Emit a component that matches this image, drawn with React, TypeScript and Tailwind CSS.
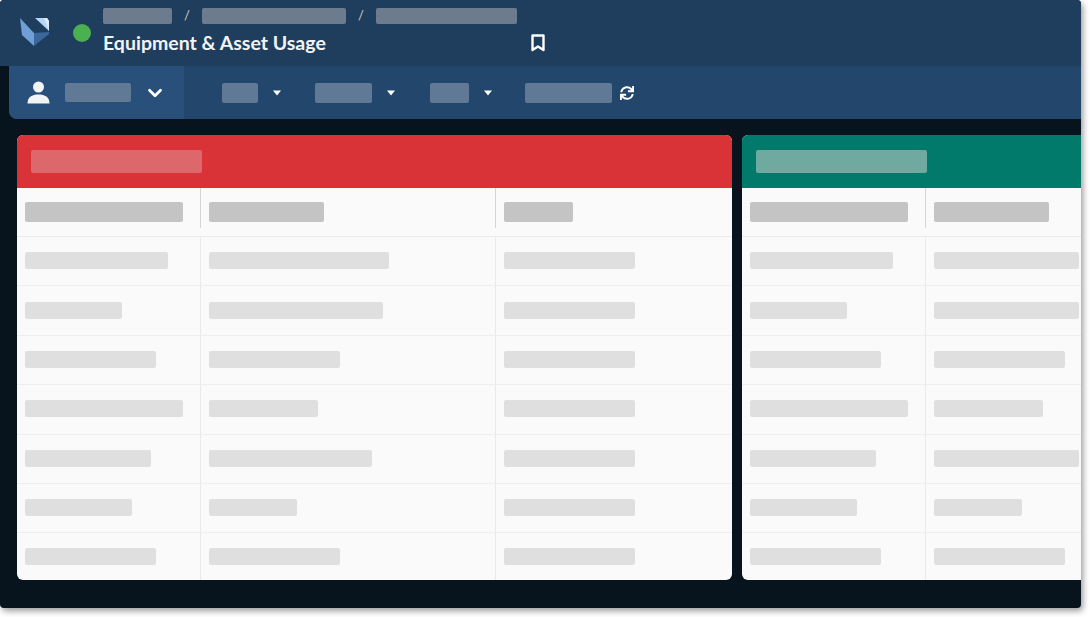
import { ChevronDown } from 'lucide-react'
import { FaSync } from 'react-icons/fa'

// Skeleton widths per table, taken row by row from the screenshot
const RED_ROWS = [
  [143, 180, 131],
  [97, 174, 131],
  [131, 131, 131],
  [158, 109, 131],
  [126, 163, 131],
  [107, 88, 131],
  [131, 131, 131],
]

const GREEN_ROWS = [
  [143, 145],
  [97, 145],
  [131, 131],
  [158, 109],
  [126, 145],
  [107, 88],
  [131, 131],
]

function Logo() {
  return (
    <svg width="30" height="30" viewBox="0 0 30 30" className="shrink-0">
      <path d="M0 1 L14 16 L14 29 L2 18 Z" fill="#6f9fd4" />
      <path d="M14 16 L29 15 L29 17 L14 29 Z" fill="#3a689c" />
      <path d="M15 1 L27 1 L29 4 L29 14 Z" fill="#b5d5f5" />
      <path d="M24 1 L27 1 L29 4 L29 14 Z" fill="#dcebfa" />
    </svg>
  )
}

function Caret() {
  return (
    <svg width="8" height="6" viewBox="0 0 8 6" className="shrink-0">
      <path d="M0 0.5 H8 L4 5.5 Z" fill="#ffffff" />
    </svg>
  )
}

function Bookmark() {
  return (
    <svg width="16" height="18" viewBox="0 0 16 18" fill="none" stroke="#ffffff" strokeWidth="2.4">
      <path d="M2.5 1.5 H13.5 V16 L8 12.5 L2.5 16 Z" strokeLinejoin="round" />
    </svg>
  )
}

function PersonIcon() {
  return (
    <svg width="23" height="23" viewBox="0 0 23 23" fill="#f1f3f5" className="shrink-0">
      <circle cx="11.5" cy="6" r="5.5" />
      <path d="M0.5 22.5 C0.5 16 5 13.5 11.5 13.5 C18 13.5 22.5 16 22.5 22.5 Z" />
    </svg>
  )
}

function Bar({ className }: { className: string }) {
  return <div className={`rounded-[2px] ${className}`} />
}

function Table({
  title,
  headerClass,
  titleClass,
  widthClass,
  columnsClass,
  headers,
  rows,
}: {
  title: number
  headerClass: string
  titleClass: string
  widthClass: string
  columnsClass: string
  headers: number[]
  rows: number[][]
}) {
  return (
    <div className={`flex flex-col shrink-0 rounded-l-md overflow-hidden bg-[#fafafa] ${widthClass}`}>
      <div className={`h-[53px] shrink-0 flex items-center pl-[14px] ${headerClass}`}>
        <div className={`h-[23px] rounded-[2px] ${titleClass}`} style={{ width: title }} />
      </div>
      <div className={`grid h-[49px] shrink-0 border-b border-[#ececec] ${columnsClass}`}>
        {headers.map((w, i) => (
          <div key={i} className={`relative flex items-center ${i > 0 ? 'pl-[9px]' : 'pl-2'}`}>
            {i > 0 && <div className="absolute left-0 top-0 bottom-2 w-px bg-[#d6d6d6]" />}
            <div className="h-5 rounded-[2px] bg-[#c4c4c4]" style={{ width: w }} />
          </div>
        ))}
      </div>
      {rows.map((row, r) => (
        <div key={r} className={`grid h-[49.4px] border-b border-[#eeeeee] last:h-auto last:flex-1 last:border-b-0 ${columnsClass}`}>
          {row.map((w, i) => (
            <div key={i} className={`flex items-center pl-2 pb-px ${i > 0 ? 'border-l border-[#eaeaea]' : ''}`}>
              <div className="h-[17px] rounded-[2px] bg-[#dfdfdf]" style={{ width: w }} />
            </div>
          ))}
        </div>
      ))}
    </div>
  )
}

export default function App() {
  return (
    <div className="w-[1090px] h-[617px] bg-white overflow-hidden font-['Lato','Open_Sans',sans-serif]">
      <div className="w-[1081px] h-[608px] flex flex-col bg-[#07131d] overflow-hidden rounded-sm shadow-[2px_3px_6px_rgba(0,0,0,0.4)]">
        {/* Title bar */}
        <header className="h-[66px] shrink-0 flex bg-[#1f3d5c]">
          <div className="w-[73px] shrink-0 flex items-center pl-5 pb-[2px]">
            <Logo />
          </div>
          <div className="w-[30px] shrink-0 flex items-center">
            <div className="w-[18px] h-[18px] rounded-full bg-[#4caf50]" />
          </div>
          <div className="flex flex-col pt-2">
            <div className="flex items-center h-4 text-[13px] text-[#c5d0db]">
              <Bar className="h-4 w-[69px] bg-[#6c7c8e]" />
              <span className="w-[30px] text-center">/</span>
              <Bar className="h-4 w-[144px] bg-[#6c7c8e]" />
              <span className="w-[30px] text-center">/</span>
              <Bar className="h-4 w-[141px] bg-[#6c7c8e]" />
            </div>
            <div className="flex items-center mt-[7px]">
              <h1 className="w-[427px] text-[19.5px] leading-[24px] font-bold text-[#f1f4f7]">Equipment &amp; Asset Usage</h1>
              <Bookmark />
            </div>
          </div>
        </header>

        {/* Filter bar */}
        <div className="h-[53px] shrink-0 ml-[9px] flex items-center rounded-bl-lg bg-[#23466c] overflow-hidden">
          <div className="w-[175px] h-full shrink-0 flex items-center pl-[18px] bg-[#28507a]">
            <PersonIcon />
            <Bar className="h-[19px] w-[66px] ml-[15px] bg-[#607a96]" />
            <ChevronDown size={22} strokeWidth={3} className="ml-[13px] text-white" />
          </div>
          <div className="flex items-center pl-[38px]">
            <Bar className="h-[20px] w-9 bg-[#607a96]" />
            <div className="ml-[15px]"><Caret /></div>
            <Bar className="h-[20px] w-[57px] ml-[34px] bg-[#607a96]" />
            <div className="ml-[15px]"><Caret /></div>
            <Bar className="h-[20px] w-[39px] ml-[35px] bg-[#607a96]" />
            <div className="ml-[15px]"><Caret /></div>
            <Bar className="h-[20px] w-[87px] ml-[33px] bg-[#607a96]" />
            <FaSync size={14} className="ml-2 text-white" />
          </div>
        </div>

        {/* Tables */}
        <div className="flex gap-[10px] pl-[17px] pt-4 h-[461px] shrink-0">
          <Table
            title={171}
            headerClass="bg-[#d93237]"
            titleClass="bg-[#dc686c]"
            widthClass="w-[715px] rounded-r-md"
            columnsClass="grid-cols-[183px_295px_237px]"
            headers={[158, 115, 69]}
            rows={RED_ROWS}
          />
          <Table
            title={171}
            headerClass="bg-[#01796b]"
            titleClass="bg-[#6fa9a0]"
            widthClass="w-[339px]"
            columnsClass="grid-cols-[183px_156px]"
            headers={[158, 115]}
            rows={GREEN_ROWS}
          />
        </div>
      </div>
    </div>
  )
}
